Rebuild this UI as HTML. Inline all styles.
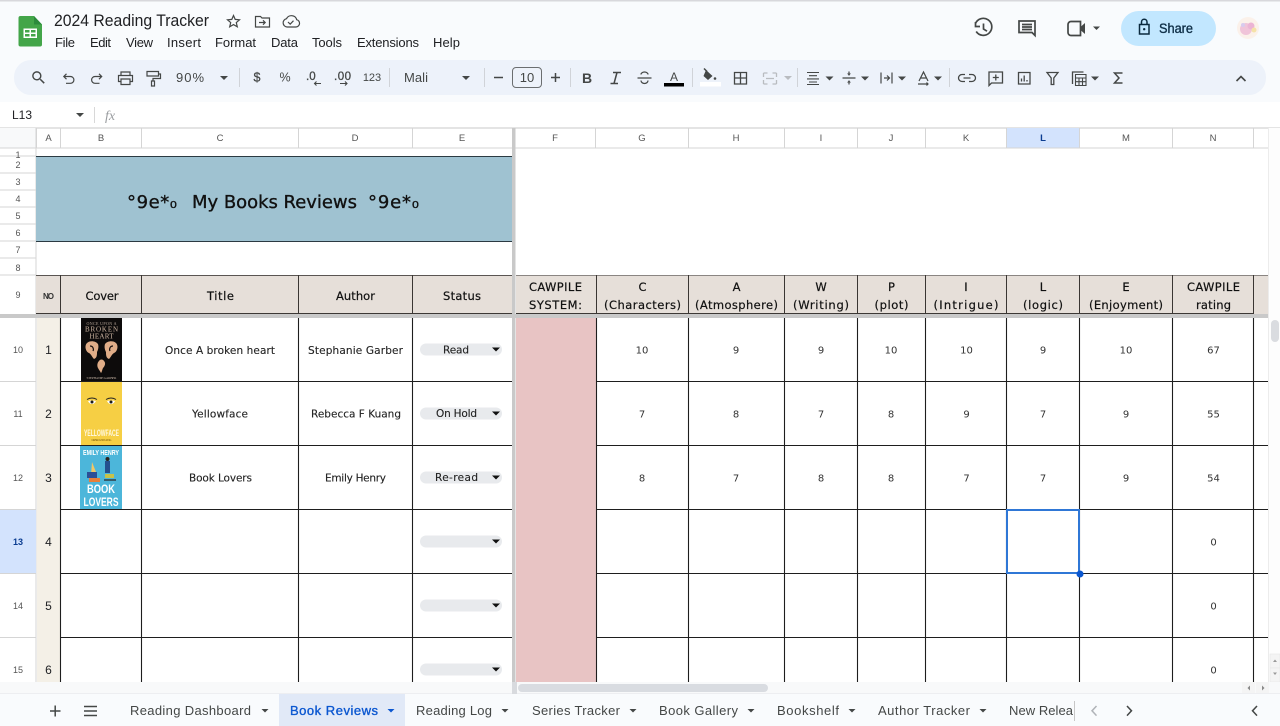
<!DOCTYPE html>
<html><head><meta charset="utf-8"><title>2024 Reading Tracker</title>
<style>
html,body{margin:0;padding:0;background:#f9fbfd;overflow:hidden}
svg{display:block}
text{font-family:"Liberation Sans",sans-serif;fill:#202124}
.m{font-size:13px;fill:#202124}
.ch{font-size:9.5px;fill:#555;text-anchor:middle}
.rh{font-size:9px;fill:#555;text-anchor:middle}
.h{font-family:"DejaVu Sans",sans-serif;font-size:11.5px;fill:#111;text-anchor:middle;stroke:#111;stroke-width:.2px}
.b{font-family:"DejaVu Sans",sans-serif;font-size:10.5px;fill:#222;text-anchor:middle;stroke:#222;stroke-width:.12px}
.n{font-family:"DejaVu Sans",sans-serif;font-size:10px;fill:#333;text-anchor:middle}
.tb{font-size:12px;fill:#444746;text-anchor:middle}
.bn{font-family:"DejaVu Sans",sans-serif;font-size:18px;fill:#111;stroke:#111;stroke-width:.35px;text-anchor:middle}
.ic{fill:none;stroke:#444746}
.ar{fill:#444746}
.g line{stroke:#1e1e1e;stroke-width:1.1px}
</style></head><body>
<svg width="1280" height="726" viewBox="0 0 1280 726" xmlns="http://www.w3.org/2000/svg" stroke-width="1.5">
<rect width="1280" height="726" fill="#f9fbfd"/>
<rect width="1280" height="1.5" fill="#d8d8dc"/>

<!-- logo -->
<path d="M20.500 16H34L42 24.500V44.500a2 2 0 0 1-2 2H20.500a2 2 0 0 1-2-2V18a2 2 0 0 1 2-2z" fill="#43a549"/>
<path d="M34 16l8 8.500h-8z" fill="#2c8a3c"/>
<path d="M23.500 28.500h13.500v9.500h-13.500zM25 30v2.500h4.500V30zm6 0v2.500h4.500V30zm-6 4v2.500h4.500V34zm6 0v2.500h4.500V34z" fill="#fff" fill-rule="evenodd"/>

<text x="54" y="26" font-size="16.500" textLength="155" lengthAdjust="spacingAndGlyphs">2024 Reading Tracker</text>
<path d="M233.500 15.500l1.700 3.900 4.300.4-3.200 2.800 1 4.200-3.800-2.200-3.800 2.200 1-4.200-3.200-2.800 4.300-.4z" class="ic" stroke-width="1.200"/>
<path d="M255.500 16.500h5l1.500 1.500h7.500v9h-14zM259 22.500h6M263 20.300l2.200 2.200-2.200 2.200" class="ic" stroke-width="1.200"/>
<path d="M287 27h9a3.700 3.700 0 0 0 .7-7.300 5.500 5.500 0 0 0-10.200-1 4.200 4.200 0 0 0 .5 8.300zM288 22l2.200 2.200 3.300-3.500" class="ic" stroke-width="1.200"/>

<text class="m" x="55" y="47" textLength="20">File</text>
<text class="m" x="90" y="47" textLength="21">Edit</text>
<text class="m" x="126" y="47" textLength="27">View</text>
<text class="m" x="167" y="47" textLength="34">Insert</text>
<text class="m" x="215" y="47" textLength="41">Format</text>
<text class="m" x="271" y="47" textLength="27">Data</text>
<text class="m" x="312" y="47" textLength="30">Tools</text>
<text class="m" x="357" y="47" textLength="62">Extensions</text>
<text class="m" x="433" y="47" textLength="27">Help</text>

<!-- top right -->
<path d="M975.500 24a8.500 8.500 0 1 1 .7 8M975.500 22.500v4.500h4.500M983.500 24v5.500l3.500 2.200" class="ic" stroke-width="1.700" transform="translate(0,-.5)"/>
<path d="M1019 22h16v14.500l-3-3h-13zM1022 25.500h10M1022 28h10M1022 30.500h10" class="ic" stroke-width="1.700" transform="translate(0,-1)"/>
<path d="M1071 22h9.500v14h-9.500a3 3 0 0 1-3-3v-8a3 3 0 0 1 3-3z" class="ic" stroke-width="1.700" transform="translate(0,-.5)"/>
<path d="M1081 27l4-3.500v11l-4-3.500z" fill="#444746" transform="translate(0,-.5)"/>
<path d="M1093 27h7l-3.500 3.500z" class="ar" transform="translate(0,-.5)"/>
<rect x="1121" y="11" width="95" height="35" rx="17.500" fill="#c2e7ff"/>
<path d="M1139.500 24.500h9.500v9.500h-9.500zM1141.500 24.500v-2.500a2.700 2.700 0 0 1 5.500 0v2.500" fill="none" stroke="#0b2a3f" stroke-width="1.500"/>
<circle cx="1144.200" cy="29.200" r="1.200" fill="#0b2a3f"/>
<text x="1159" y="33" font-size="13.500" textLength="34" lengthAdjust="spacingAndGlyphs" style="fill:#0f2f47;stroke:#0f2f47;stroke-width:.35px">Share</text>
<circle cx="1248" cy="28" r="11" fill="#fbf1ea"/>
<circle cx="1246" cy="29" r="6" fill="#f0c4d9"/>
<circle cx="1251" cy="26" r="3.500" fill="#ecb4d4"/>
<circle cx="1254" cy="30" r="2.500" fill="#f5e2a8"/>
<circle cx="1243" cy="25" r="2" fill="#d8cbee"/>

<!-- toolbar -->
<rect x="14" y="60" width="1252" height="35" rx="17" fill="#edf2fa"/>
<g transform="translate(30,69) scale(.72)"><path fill="#444746" d="M15.500 14h-.79l-.28-.27A6.470 6.470 0 0 0 16 9.500 6.500 6.500 0 1 0 9.500 16c1.610 0 3.090-.59 4.230-1.570l.27.28v.79l5 4.990L20.490 19l-4.990-5zm-6 0C7.010 14 5 11.990 5 9.500S7.010 5 9.500 5 14 7.010 14 9.500 11.990 14 9.500 14z"/></g>
<path d="M64 76.500h6.500a3.400 3.400 0 0 1 0 6.800H66M66.500 73.800l-2.700 2.700 2.700 2.700" class="ic" stroke-width="1.200"/>
<path d="M101.500 76.500h-6.500a3.400 3.400 0 0 0 0 6.800h4.500M99 73.800l2.700 2.700-2.700 2.700" class="ic" stroke-width="1.200"/>
<path d="M121 75.500v-3.500h9v3.500M121.500 81.500h-3v-6h14v6h-3M121 79h9v5.500h-9z" class="ic" stroke-width="1.200"/>
<path d="M147 71.500h11.500v4.500H147zM158.500 74h2v4.500h-7.500v2.500M151.500 81h3v5h-3z" class="ic" stroke-width="1.200"/>
<text x="176" y="82" font-size="13" textLength="28" style="fill:#444746">90%</text>
<path d="M220 76h8l-4 4z" class="ar"/>
<rect x="239" y="68" width="1" height="19" fill="#d0d3d8"/>
<text class="tb" x="257" y="81.500" style="font-size:12.500px;stroke:#444746;stroke-width:.25px">$</text>
<text class="tb" x="285" y="81.500" style="font-size:12.500px">%</text>
<text x="306" y="80" font-size="11.500" style="fill:#444746;stroke:#444746;stroke-width:.3px">.0</text>
<path d="M321 83.500h-6.500M316.500 81.500l-2 2 2 2" class="ic" stroke-width="1.100"/>
<text x="334" y="80" font-size="11.500" textLength="17" style="fill:#444746;stroke:#444746;stroke-width:.3px">.00</text>
<path d="M340 83.500h7M345 81.500l2 2-2 2" class="ic" stroke-width="1.100"/>
<text class="tb" x="372" y="81" style="font-size:11px">123</text>
<rect x="389" y="68" width="1" height="19" fill="#d0d3d8"/>
<text x="404" y="82" font-size="13" textLength="24" style="fill:#444746">Mali</text>
<path d="M462 76h8l-4 4z" class="ar"/>
<rect x="484" y="68" width="1" height="19" fill="#d0d3d8"/>
<path d="M494 77.500h9" class="ic"/>
<rect x="512.500" y="67.500" width="29" height="20" rx="3.500" fill="none" stroke="#6b6e70" stroke-width="1"/>
<text class="tb" x="527" y="82" style="font-size:13px">10</text>
<path d="M551 77.500h9M555.500 73v9" class="ic"/>
<rect x="570" y="68" width="1" height="19" fill="#d0d3d8"/>
<text x="587" y="83" text-anchor="middle" font-size="14" font-weight="bold" style="fill:#444746">B</text>
<path d="M613 72.500h8M610.500 83.500h7.500M617 72.500l-3 11" class="ic" stroke-width="1.500"/>
<path d="M637.500 78h14M641 74.500a3.500 2.500 0 0 1 7 0M641 80.500a3.500 3 0 0 0 7 0" class="ic" stroke-width="1.200"/>
<text x="674" y="81" text-anchor="middle" font-size="12" style="fill:#444746">A</text>
<rect x="664" y="83" width="20" height="3.500" fill="#000"/>
<rect x="692" y="68" width="1" height="19" fill="#d0d3d8"/>
<path d="M706 70l6.500 6-4.500 4-4.500-4z" fill="#444746"/><path d="M704 68.500l3 3" class="ic"/><circle cx="715" cy="78.500" r="1.300" fill="#444746"/>
<rect x="700" y="82" width="21" height="4.500" fill="#fff"/>
<path d="M734.500 72.500h12v11.500h-12zM740.500 72.500v11.500M734.500 78h12" class="ic" stroke-width="1.300"/>
<path d="M763.500 73h4M772.500 73h4M763.500 84h4M772.500 84h4M763.500 73v4M776.500 73v4M763.500 80v4M776.500 80v4M766 78.500h8" fill="none" stroke="#b9bcc0" stroke-width="1.300"/>
<path d="M784 76h8l-4 4z" fill="#b9bcc0"/>
<rect x="797" y="68" width="1" height="19" fill="#d0d3d8"/>
<path d="M807 72.500h12M809 75.700h8M807 78.900h12M809 82h8M807 84.500h12" class="ic" stroke-width="1.100"/>
<path d="M825.500 76.500h8l-4 4z" class="ar"/>
<path d="M842.500 78h13M849 71.500v4M849 84.500v-4" class="ic" stroke-width="1.200"/>
<path d="M849 75.500l-2-2h4zM849 80.500l-2 2h4z" class="ar"/>
<path d="M861 76.500h8l-4 4z" class="ar"/>
<path d="M881 72.500v11M892 72.500v11M884 78h5M887 75.500l2.500 2.500-2.500 2.500" class="ic" stroke-width="1.200"/>
<path d="M898 76.500h8l-4 4z" class="ar"/>
<path d="M919 81l4.500-9 4.500 9M920.500 78h6M918 84h10M926.500 82.500l1.500 1.500-1.500 1.500" class="ic" stroke-width="1.200"/>
<path d="M934 76.500h8l-4 4z" class="ar"/>
<rect x="949" y="68" width="1" height="19" fill="#d0d3d8"/>
<path d="M965 74.500h-3a3.500 3.500 0 0 0 0 7h3M969 74.500h3a3.500 3.500 0 0 1 0 7h-3M963.500 78h7" class="ic" stroke-width="1.300"/>
<path d="M989 72h13.500v11h-11l-2.500 2.500zM995.800 74.500v6M992.800 77.500h6" class="ic" stroke-width="1.300"/>
<path d="M1018.500 72.500h11.500v11.500h-11.500zM1021.500 81.500v-3M1024.200 81.500v-6M1027 81.500v-1.500" class="ic" stroke-width="1.300"/>
<path d="M1047 72.500h11l-4.200 5.500v6.500h-2.600V78z" class="ic" stroke-width="1.300"/>
<path d="M1072.500 84v-12h11" class="ic" stroke-width="1.300"/>
<path d="M1075.500 74.500h10.500v11h-10.500zM1075.500 78h10.500M1075.500 81.700h10.500M1079 78v7.500M1082.500 78v7.500" class="ic" stroke-width="1.100"/>
<path d="M1091 76.500h8l-4 4z" class="ar"/>
<path d="M1122.500 73h-8l4.500 5-4.500 5h8" class="ic" stroke-width="1.500"/>
<path d="M1236.500 81l4.500-4.500 4.500 4.500" class="ic" stroke-width="1.600"/>

<!-- formula bar -->
<rect y="102" width="1280" height="26" fill="#fff"/>
<text x="12" y="119" font-size="12" style="fill:#202124">L13</text>
<path d="M76 113h8l-4 4z" class="ar"/>
<rect x="94" y="107" width="1" height="16" fill="#d8d8d8"/>
<text x="105" y="120" font-style="italic" font-size="14" style="fill:#9a9da0;font-family:'Liberation Serif',serif">fx</text>

<!-- sheet base -->
<rect y="127" width="1280" height="567" fill="#fff"/>
<rect y="127.500" width="1280" height="1" fill="#c8c8c8"/>
<rect y="128" width="36" height="20" fill="#f8f9fa"/>
<rect x="1007" y="128" width="72" height="20" fill="#d3e3fd"/>
<g fill="#d5d5d5">
<rect x="36" y="128" width="1" height="20"/><rect x="60" y="128" width="1" height="20"/><rect x="141" y="128" width="1" height="20"/><rect x="298" y="128" width="1" height="20"/><rect x="412" y="128" width="1" height="20"/><rect x="595" y="128" width="1" height="20"/><rect x="688" y="128" width="1" height="20"/><rect x="784" y="128" width="1" height="20"/><rect x="857" y="128" width="1" height="20"/><rect x="925" y="128" width="1" height="20"/><rect x="1006" y="128" width="1" height="20"/><rect x="1079" y="128" width="1" height="20"/><rect x="1172" y="128" width="1" height="20"/><rect x="1253" y="128" width="1" height="20"/>
<rect y="147.500" width="1268" height="1"/>
<rect x="35.500" y="128" width="1" height="554"/>
<rect y="155.500" width="36" height="1"/><rect y="172.500" width="36" height="1"/><rect y="189.500" width="36" height="1"/><rect y="206.500" width="36" height="1"/><rect y="223.500" width="36" height="1"/><rect y="240.500" width="36" height="1"/><rect y="257.500" width="36" height="1"/><rect y="274.500" width="36" height="1"/>
<rect y="381" width="36" height="1"/><rect y="445" width="36" height="1"/><rect y="509" width="36" height="1"/><rect y="573" width="36" height="1"/><rect y="637" width="36" height="1"/>
</g>
<text class="ch" x="48.500" y="141">A</text><text class="ch" x="101" y="141">B</text><text class="ch" x="220" y="141">C</text><text class="ch" x="355" y="141">D</text><text class="ch" x="462" y="141">E</text><text class="ch" x="555" y="141">F</text><text class="ch" x="642" y="141">G</text><text class="ch" x="736" y="141">H</text><text class="ch" x="821" y="141">I</text><text class="ch" x="891" y="141">J</text><text class="ch" x="966" y="141">K</text><text class="ch" x="1043" y="141" font-weight="bold" style="fill:#0b3d91">L</text><text class="ch" x="1126" y="141">M</text><text class="ch" x="1213" y="141">N</text>
<text class="rh" x="18" y="158">1</text><text class="rh" x="18" y="168">2</text><text class="rh" x="18" y="185">3</text><text class="rh" x="18" y="202">4</text><text class="rh" x="18" y="219">5</text><text class="rh" x="18" y="236">6</text><text class="rh" x="18" y="253">7</text><text class="rh" x="18" y="271">8</text><text class="rh" x="18" y="298">9</text>
<text class="rh" x="18" y="353">10</text><text class="rh" x="18" y="417">11</text><text class="rh" x="18" y="481">12</text>
<rect y="510" width="36" height="63" fill="#d3e3fd"/>
<text class="rh" x="18" y="545" font-weight="bold" style="fill:#0b3d91">13</text>
<text class="rh" x="18" y="609">14</text><text class="rh" x="18" y="673">15</text>

<!-- banner -->
<rect x="36" y="156" width="476" height="85" fill="#9fc2d1"/>
<rect x="36" y="156" width="476" height="1" fill="#2b3a42"/>
<rect x="36" y="241" width="476" height="1" fill="#2b3a42"/>
<text class="bn" x="152" y="208" textLength="50">°9e*₀</text>
<text class="bn" x="274.500" y="208" textLength="165">My Books Reviews</text>
<text class="bn" x="393.500" y="208" textLength="51">°9e*₀</text>

<!-- header row 9 -->
<rect x="36" y="275" width="476" height="39" fill="#e6dfd9"/>
<rect x="516" y="275" width="752" height="39" fill="#e6dfd9"/>
<rect x="36" y="275" width="476" height="1" fill="#5a5552"/>
<rect x="516" y="275" width="752" height="1" fill="#8a8582"/>
<rect x="0" y="314" width="1268" height="4" fill="#c9c9c9"/>
<rect x="36" y="313" width="476" height="1" fill="#3c3835"/>
<rect x="516" y="313" width="738" height="1" fill="#3c3835"/>
<g fill="#3a3633">
<rect x="60" y="275" width="1" height="39"/><rect x="141" y="275" width="1" height="39"/><rect x="298" y="275" width="1" height="39"/><rect x="412" y="275" width="1" height="39"/><rect x="596" y="275" width="1" height="39"/><rect x="688" y="275" width="1" height="39"/><rect x="784" y="275" width="1" height="39"/><rect x="857" y="275" width="1" height="39"/><rect x="925" y="275" width="1" height="39"/><rect x="1006" y="275" width="1" height="39"/><rect x="1079" y="275" width="1" height="39"/><rect x="1172" y="275" width="1" height="39"/><rect x="1253" y="275" width="1" height="39"/>
</g>
<text x="48.500" y="299" text-anchor="middle" font-size="8" font-weight="bold" textLength="11" style="fill:#333">NO</text>
<text class="h" x="102" y="300" textLength="33">Cover</text>
<text class="h" x="220.500" y="300" textLength="27">Title</text>
<text class="h" x="355.500" y="300" textLength="39">Author</text>
<text class="h" x="462" y="300" textLength="38">Status</text>
<text class="h" x="555.500" y="291" textLength="53">CAWPILE</text>
<text class="h" x="555.500" y="309" textLength="53">SYSTEM:</text>
<text class="h" x="642.500" y="291">C</text><text class="h" x="642.500" y="309" textLength="77">(Characters)</text>
<text class="h" x="736.500" y="291">A</text><text class="h" x="736.500" y="309" textLength="83">(Atmosphere)</text>
<text class="h" x="821" y="291">W</text><text class="h" x="821" y="309" textLength="56">(Writing)</text>
<text class="h" x="891.500" y="291">P</text><text class="h" x="891.500" y="309" textLength="34">(plot)</text>
<text class="h" x="966" y="291">I</text><text class="h" x="966" y="309" textLength="65">(Intrigue)</text>
<text class="h" x="1043" y="291">L</text><text class="h" x="1043" y="309" textLength="40">(logic)</text>
<text class="h" x="1126" y="291">E</text><text class="h" x="1126" y="309" textLength="74">(Enjoyment)</text>
<text class="h" x="1213.500" y="291" textLength="53">CAWPILE</text><text class="h" x="1213.500" y="309" textLength="35">rating</text>

<!-- body fills -->
<rect x="37" y="318" width="23" height="364" fill="#f4f0e7"/>
<rect x="516" y="318" width="80" height="364" fill="#e8c4c4"/>

<!-- grid -->
<g class="g">
<line x1="60.500" y1="318" x2="60.500" y2="682"/><line x1="141.500" y1="318" x2="141.500" y2="682"/><line x1="298.500" y1="318" x2="298.500" y2="682"/><line x1="412.500" y1="318" x2="412.500" y2="682"/><line x1="596.500" y1="318" x2="596.500" y2="682"/><line x1="688.500" y1="318" x2="688.500" y2="682"/><line x1="784.500" y1="318" x2="784.500" y2="682"/><line x1="857.500" y1="318" x2="857.500" y2="682"/><line x1="925.500" y1="318" x2="925.500" y2="682"/><line x1="1006.500" y1="318" x2="1006.500" y2="682"/><line x1="1079.500" y1="318" x2="1079.500" y2="682"/><line x1="1172.500" y1="318" x2="1172.500" y2="682"/><line x1="1253.500" y1="318" x2="1253.500" y2="682"/>
<line x1="61" y1="381.500" x2="512" y2="381.500"/><line x1="61" y1="445.500" x2="512" y2="445.500"/><line x1="61" y1="509.500" x2="512" y2="509.500"/><line x1="61" y1="573.500" x2="512" y2="573.500"/><line x1="61" y1="637.500" x2="512" y2="637.500"/>
<line x1="597" y1="381.500" x2="1268" y2="381.500"/><line x1="597" y1="445.500" x2="1268" y2="445.500"/><line x1="597" y1="509.500" x2="1268" y2="509.500"/><line x1="597" y1="573.500" x2="1268" y2="573.500"/><line x1="597" y1="637.500" x2="1268" y2="637.500"/>
</g>
<!-- vertical freeze -->
<rect x="512" y="128" width="3.500" height="566" fill="#c9c9c9"/>

<!-- No -->
<g font-size="12" text-anchor="middle">
<text x="48.500" y="354">1</text><text x="48.500" y="418">2</text><text x="48.500" y="482">3</text><text x="48.500" y="546">4</text><text x="48.500" y="610">5</text><text x="48.500" y="674">6</text>
</g>

<!-- covers -->
<rect x="81" y="318" width="41" height="63" fill="#0d0b0b"/>
<text x="101.500" y="325" text-anchor="middle" textLength="30" style="font-family:'Liberation Serif',serif;font-size:4px;fill:#b9a89a">ONCE UPON A</text>
<text x="101.500" y="331.500" text-anchor="middle" textLength="33" style="font-family:'Liberation Serif',serif;font-size:7px;fill:#d0b8a4">BROKEN</text>
<text x="101.500" y="338.500" text-anchor="middle" textLength="24" style="font-family:'Liberation Serif',serif;font-size:7px;fill:#d0b8a4">HEART</text>
<g fill="#e0ad88">
<path d="M87 343c3-3 9-2 11 1 1 3 0 6-1 8 0 3 0 6-3 7-2-2-3-5-5-6-3-1-5-7-2-10z"/>
<path d="M116 343c-3-3-9-2-11 1-1 3 0 6 1 8 0 3 0 6 3 7 2-2 3-5 5-6 3-1 5-7 2-10z"/>
<path d="M99 361c1-2 4-2 5 0 2 2 1 5-1 7-1 2-1 4-2 5-1-2-2-3-3-5-1-2-1-5 1-7z"/>
</g>
<path d="M90 346c3 0 4 3 3 5M113 346c-3 0-4 3-3 5" stroke="#1a1210" stroke-width="1.200" fill="none"/>
<text x="101.500" y="379" text-anchor="middle" textLength="30" style="font-family:'Liberation Serif',serif;font-size:3.500px;fill:#b9a89a">STEPHANIE GARBER</text>

<rect x="81" y="382" width="41" height="63" fill="#f6cf44"/>
<path d="M87 399.500q5-3 10 0" stroke="#222" stroke-width="1" fill="none"/>
<path d="M106 399.500q5-3 10 0" stroke="#222" stroke-width="1" fill="none"/>
<path d="M88 401q4-1 8 0-1.500 3-4 3-2.500 0-4-3zM107 401q4-1 8 0-1.500 3-4 3-2.500 0-4-3z" fill="#fff"/>
<circle cx="92" cy="402" r="1.500" fill="#1b1b1b"/><circle cx="111" cy="402" r="1.500" fill="#1b1b1b"/>
<text x="101.500" y="436" text-anchor="middle" textLength="35" lengthAdjust="spacingAndGlyphs" font-weight="bold" style="font-size:9px;fill:#fff8e0">YELLOWFACE</text>
<text x="101.500" y="441" text-anchor="middle" textLength="20" style="font-size:3px;fill:#8a6a10">REBECCA F KUANG</text>

<rect x="80" y="446" width="42" height="63" fill="#4cb6da"/>
<text x="101" y="455" text-anchor="middle" textLength="36" lengthAdjust="spacingAndGlyphs" font-weight="bold" style="font-size:7px;fill:#fff">EMILY HENRY</text>
<path d="M92 462l4 10-5 3z" fill="#f1c766"/><rect x="87" y="472" width="10" height="6" fill="#2c4f96"/>
<path d="M105 461h5v12h-5z" fill="#24508f"/><circle cx="107.500" cy="459" r="2" fill="#2a2320"/>
<rect x="89" y="478" width="11" height="4" fill="#e77f39"/><rect x="105" y="474" width="9" height="4" fill="#c7c24a"/><rect x="104" y="479" width="12" height="2" fill="#375c6b"/>
<text x="101" y="493" text-anchor="middle" textLength="28" lengthAdjust="spacingAndGlyphs" font-weight="bold" style="font-size:12px;fill:#fff">BOOK</text>
<text x="101" y="506" text-anchor="middle" textLength="35" lengthAdjust="spacingAndGlyphs" font-weight="bold" style="font-size:12px;fill:#fff">LOVERS</text>

<!-- body text -->
<text class="b" x="220" y="354" textLength="110">Once A broken heart</text>
<text class="b" x="355.500" y="354" textLength="95">Stephanie Garber</text>
<text class="b" x="220" y="417.500" textLength="56">Yellowface</text>
<text class="b" x="356" y="417.500" textLength="90">Rebecca F Kuang</text>
<text class="b" x="220.500" y="481.500" textLength="63">Book Lovers</text>
<text class="b" x="355.500" y="481.500" textLength="61">Emily Henry</text>

<!-- chips -->
<g fill="#e8eaed">
<rect x="420" y="343.500" width="82" height="12" rx="6"/><rect x="420" y="407.500" width="82" height="12" rx="6"/><rect x="420" y="471.500" width="82" height="12" rx="6"/><rect x="420" y="535.500" width="82" height="12" rx="6"/><rect x="420" y="599.500" width="82" height="12" rx="6"/><rect x="420" y="663.500" width="82" height="12" rx="6"/>
</g>
<g fill="#111">
<path d="M492 347.500h8l-4 4z"/><path d="M492 411.500h8l-4 4z"/><path d="M492 475.500h8l-4 4z"/><path d="M492 539.500h8l-4 4z"/><path d="M492 603.500h8l-4 4z"/><path d="M492 667.500h8l-4 4z"/>
</g>
<text class="b" x="456" y="353.500" textLength="26">Read</text>
<text class="b" x="456.500" y="417" textLength="41">On Hold</text>
<text class="b" x="456.500" y="481" textLength="43">Re-read</text>

<!-- numbers -->
<text class="n" x="642" y="353.500">10</text><text class="n" x="736" y="353.500">9</text><text class="n" x="821" y="353.500">9</text><text class="n" x="891" y="353.500">10</text><text class="n" x="966.500" y="353.500">10</text><text class="n" x="1043" y="353.500">9</text><text class="n" x="1126" y="353.500">10</text><text class="n" x="1213.500" y="353.500">67</text>
<text class="n" x="642" y="417.500">7</text><text class="n" x="736" y="417.500">8</text><text class="n" x="821" y="417.500">7</text><text class="n" x="891" y="417.500">8</text><text class="n" x="966.500" y="417.500">9</text><text class="n" x="1043" y="417.500">7</text><text class="n" x="1126" y="417.500">9</text><text class="n" x="1213.500" y="417.500">55</text>
<text class="n" x="642" y="481.500">8</text><text class="n" x="736" y="481.500">7</text><text class="n" x="821" y="481.500">8</text><text class="n" x="891" y="481.500">8</text><text class="n" x="966.500" y="481.500">7</text><text class="n" x="1043" y="481.500">7</text><text class="n" x="1126" y="481.500">9</text><text class="n" x="1213.500" y="481.500">54</text>
<text class="n" x="1213.500" y="545.500">0</text><text class="n" x="1213.500" y="609.500">0</text><text class="n" x="1213.500" y="673.500">0</text>

<!-- selection -->
<rect x="1007" y="510" width="72" height="63" fill="none" stroke="#2f77d6" stroke-width="2"/>
<circle cx="1080" cy="574" r="3.500" fill="#0b57d0"/>

<!-- v scrollbar -->
<rect x="1268" y="128" width="12" height="554" fill="#fdfdfd"/>
<rect x="1268" y="128" width="1" height="554" fill="#ececec"/>
<rect x="1271" y="320" width="8" height="22" rx="4" fill="#dadce0"/>
<rect x="1270" y="654" width="10" height="14" fill="#f4f4f4" stroke="#e4e4e4" stroke-width=".5"/><rect x="1270" y="668" width="10" height="14" fill="#f4f4f4" stroke="#e4e4e4" stroke-width=".5"/>
<path d="M1273 662l2-2.500 2 2.500z" fill="#999"/><path d="M1273 672.500l2 2.500 2-2.500z" fill="#999"/>

<!-- h scrollbar -->
<rect x="0" y="682" width="1280" height="12" fill="#f8f9fa"/>
<rect x="0" y="693.500" width="1280" height="1" fill="#e2e4e8"/>
<rect x="512" y="682" width="5" height="12" fill="#d8dade"/>
<rect x="518" y="684" width="250" height="8" rx="4" fill="#d9dce1"/>
<rect x="1242" y="682" width="13" height="11" fill="#f4f4f4"/><rect x="1256" y="682" width="13" height="11" fill="#f4f4f4"/>
<path d="M1250 685.500l-2.500 2.500 2.500 2.500z" fill="#888"/><path d="M1262 685.500l2.500 2.500-2.500 2.500z" fill="#888"/>

<!-- tab bar -->
<rect y="694" width="1280" height="32" fill="#f9fbfd"/>
<path d="M50 711h10.500M55.200 705.500v11" class="ic"/>
<path d="M84 706.500h13M84 711h13M84 715.500h13" class="ic"/>
<rect x="279" y="694" width="126" height="32" fill="#e1e9f7"/>
<text x="130" y="715" font-size="13" textLength="121" style="fill:#444746">Reading Dashboard</text>
<text x="416" y="715" font-size="13" textLength="76" style="fill:#444746">Reading Log</text>
<text x="532" y="715" font-size="13" textLength="88" style="fill:#444746">Series Tracker</text>
<text x="659" y="715" font-size="13" textLength="79" style="fill:#444746">Book Gallery</text>
<text x="777" y="715" font-size="13" textLength="62" style="fill:#444746">Bookshelf</text>
<text x="878" y="715" font-size="13" textLength="92" style="fill:#444746">Author Tracker</text>
<text x="1009" y="715" font-size="13" textLength="64" style="fill:#444746">New Relea</text>
<text x="290" y="715" font-size="13" textLength="88" style="fill:#0b57d0;stroke:#0b57d0;stroke-width:.35px">Book Reviews</text>
<path d="M261.500 709h7l-3.500 3.500z" class="ar"/>
<path d="M387.500 709h7l-3.500 3.500z" fill="#0b57d0"/>
<path d="M501.500 709h7l-3.500 3.500z" class="ar"/>
<path d="M629.500 709h7l-3.500 3.500z" class="ar"/>
<path d="M747.500 709h7l-3.500 3.500z" class="ar"/>
<path d="M848.500 709h7l-3.500 3.500z" class="ar"/>
<path d="M979.500 709h7l-3.500 3.500z" class="ar"/>
<rect x="1074" y="701" width="1" height="20" fill="#c7c7c7"/>
<path d="M1096.500 706l-4.500 4.800 4.500 4.800" fill="none" stroke="#b0b3b8" stroke-width="1.500"/>
<path d="M1127 706l4.500 4.800-4.500 4.800" class="ic"/>
<path d="M1257 706l-4.500 4.800 4.500 4.800" class="ic"/>
</svg>
</body></html>
